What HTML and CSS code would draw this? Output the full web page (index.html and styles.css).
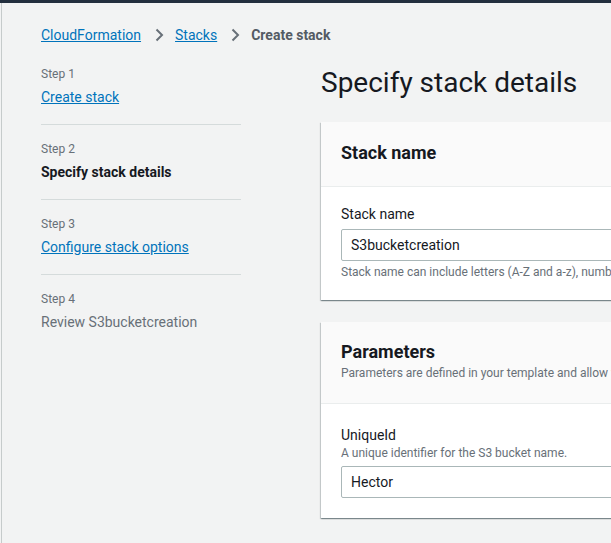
FILE: index.html
```html
<!DOCTYPE html>
<html>
<head>
<meta charset="utf-8">
<link rel="stylesheet" href="styles.css">
</head>
<body>
<div class="topbar"></div>
<div class="page">
  <nav class="breadcrumbs">
    <a href="#" class="crumb-link">CloudFormation</a>
    <svg class="chev" width="16" height="16" viewBox="0 0 16 16"><path d="M5.5 2.5 L11 8 L5.5 13.5" fill="none" stroke="currentColor" stroke-width="2"/></svg>
    <a href="#" class="crumb-link">Stacks</a>
    <svg class="chev" width="16" height="16" viewBox="0 0 16 16"><path d="M5.5 2.5 L11 8 L5.5 13.5" fill="none" stroke="currentColor" stroke-width="2"/></svg>
    <span class="crumb-current">Create stack</span>
  </nav>
  <div class="layout">
    <ul class="steps">
      <li class="step">
        <div class="step-num">Step 1</div>
        <a href="#" class="step-title link">Create stack</a>
      </li>
      <li class="step">
        <div class="step-num">Step 2</div>
        <div class="step-title current">Specify stack details</div>
      </li>
      <li class="step">
        <div class="step-num">Step 3</div>
        <a href="#" class="step-title link">Configure stack options</a>
      </li>
      <li class="step">
        <div class="step-num">Step 4</div>
        <div class="step-title disabled">Review S3bucketcreation</div>
      </li>
    </ul>
    <main class="main">
      <h1 class="title">Specify stack details</h1>
      <section class="card">
        <header class="card-header">
          <h2 class="card-title">Stack name</h2>
        </header>
        <div class="card-body">
          <label class="field-label">Stack name</label>
          <input class="input" type="text" value="S3bucketcreation">
          <div class="hint">Stack name can include letters (A-Z and a-z), numbers (0-9), and dashes (-).</div>
        </div>
      </section>
      <section class="card">
        <header class="card-header params">
          <h2 class="card-title">Parameters</h2>
          <div class="card-desc">Parameters are defined in your template and allow you to input custom values when you create or update a stack.</div>
        </header>
        <div class="card-body params-body">
          <label class="field-label">UniqueId</label>
          <div class="field-desc">A unique identifier for the S3 bucket name.</div>
          <input class="input" type="text" value="Hector">
        </div>
      </section>
    </main>
  </div>
</div>
</body>
</html>
```

FILE: styles.css
```css
* { box-sizing: border-box; }
html, body { margin: 0; padding: 0; }
body {
  background: #f2f3f3;
  font-family: "Roboto", "Liberation Sans", sans-serif;
  font-size: 14px;
  line-height: 20px;
  color: #16191f;
  overflow: hidden;
  width: 611px;
  height: 543px;
}
.topbar {
  height: 3px;
  background: #232f3e;
}
.page {
  margin-left: 1px;
  border-left: 1px solid #c6cbcb;
  height: 540px;
}
.breadcrumbs {
  display: flex;
  align-items: center;
  padding: 22px 0 0 39px;
  height: 42px;
}
.crumb-link {
  color: #0073bb;
  text-decoration: underline;
}
.chev {
  color: #687078;
  margin: 0 8px 0 10px;
}
.crumb-current {
  color: #545b64;
  font-weight: 700;
}
.layout {
  display: flex;
}
.steps {
  list-style: none;
  margin: 0;
  padding: 21px 0 0 39px;
  width: 319px;
  flex: none;
}
.step {
  width: 200px;
  display: flex;
  flex-direction: column;
  gap: 5px;
  padding: 16px 0 17px;
  border-top: 1px solid #d5dbdb;
}
.step:first-child {
  border-top: none;
  padding-top: 0;
}
.step-num {
  font-size: 12px;
  line-height: 16px;
  color: #687078;
}
.step-title {
  line-height: 20px;
}
.step-title.link {
  color: #0073bb;
  text-decoration: underline;
  align-self: flex-start;
}
.step-title.current {
  font-weight: 700;
  color: #16191f;
}
.step-title.disabled {
  color: #687078;
}
.main {
  width: 800px;
  flex: none;
}
.title {
  margin: 20px 0 21px 0;
  font-size: 28px;
  line-height: 36px;
  font-weight: 400;
  color: #16191f;
}
.card {
  background: #fff;
  box-shadow: 0 1px 1px 0 rgba(0, 28, 36, .3), 1px 1px 1px 0 rgba(0, 28, 36, .15), -1px 1px 1px 0 rgba(0, 28, 36, .15);
  margin-bottom: 22px;
}
.card-header {
  background: #fafafa;
  border-bottom: 1px solid #eaeded;
  padding: 20px 20px 22px;
}
.card-title {
  margin: 0;
  font-size: 18px;
  line-height: 22px;
  font-weight: 700;
}
.card-header.params {
  padding: 19px 20px 22px;
}
.card-desc {
  margin-top: 2px;
  font-size: 12px;
  line-height: 16px;
  color: #687078;
  white-space: nowrap;
}
.card-body {
  padding: 17px 20px 20px;
  display: flex;
  flex-direction: column;
}
.params-body {
  padding-top: 21px;
}
.field-label {
  line-height: 20px;
  color: #16191f;
}
.field-desc {
  font-size: 12px;
  line-height: 16px;
  color: #687078;
  margin-bottom: 5px;
}
.input {
  margin-top: 5px;
  height: 32px;
  border: 1px solid #aab7b8;
  border-radius: 2px;
  padding: 0 9px;
  font-family: inherit;
  font-size: 14px;
  color: #16191f;
  background: #fff;
  outline: none;
}
.field-desc + .input { margin-top: 0; }
.hint {
  margin-top: 3px;
  font-size: 12px;
  line-height: 16px;
  color: #687078;
  white-space: nowrap;
}
```
